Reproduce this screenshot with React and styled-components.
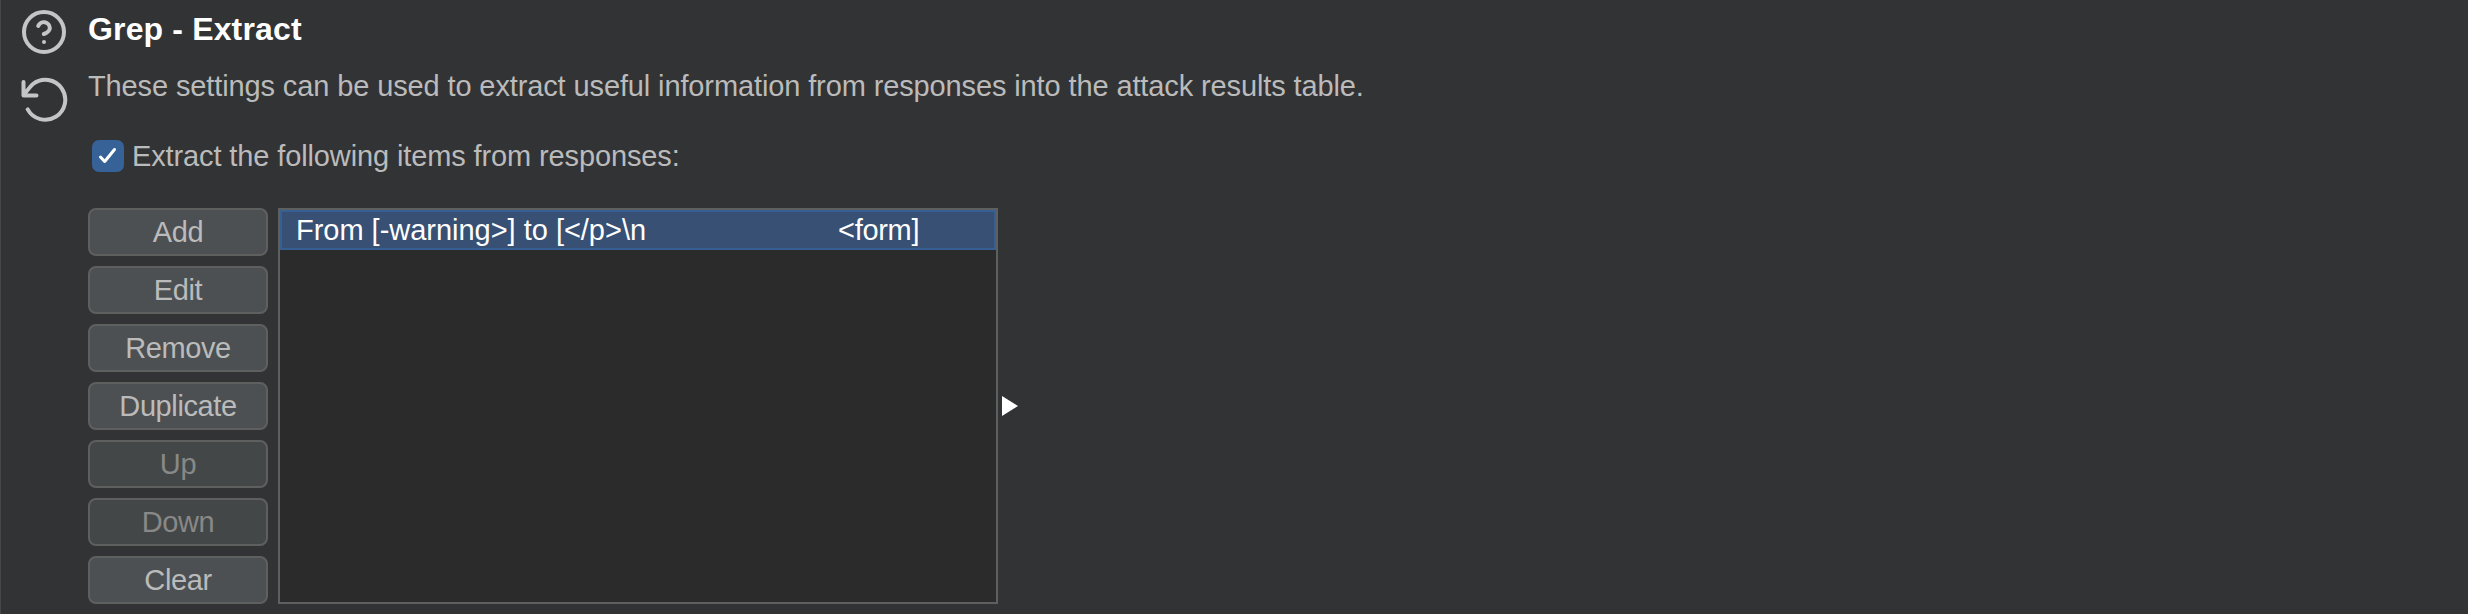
import React from 'react';
import styled, { createGlobalStyle } from 'styled-components';

const GlobalStyle = createGlobalStyle`
  * { box-sizing: border-box; }
  body {
    margin: 0;
    background: #323335;
    font-family: "Liberation Sans", Arial, sans-serif;
    font-size: 29px;
    color: #bbbbbb;
  }
`;

const Panel = styled.main`
  display: flex;
  height: 614px;
  overflow: hidden;
  border-left: 1px solid #464749;
  background: #323335;
`;

const Rail = styled.aside`
  display: flex;
  flex-direction: column;
  width: 87px;
  padding: 8px 0 0 19px;
  gap: 20px;
  flex: none;
`;

const IconButton = styled.button`
  display: block;
  width: 48px;
  height: 48px;
  padding: 0;
  border: 0;
  background: none;
  color: #c4c5c7;
  svg { display: block; fill: none; stroke: currentColor; stroke-width: 4; stroke-linecap: round; stroke-linejoin: round; }
`;

const Content = styled.section`
  display: flex;
  flex-direction: column;
  flex: 1;
`;

const Line = styled.span`
  display: block;
  white-space: pre;
  line-height: 32px;
  letter-spacing: ${(p) => p.$track ?? -0.12}px;
`;

const Title = styled.h1`
  margin: 13px 0 0;
  font-size: 32px;
  line-height: 32px;
  font-weight: 700;
  color: #ffffff;
  letter-spacing: 0.15px;
`;

const Description = styled.div`
  margin-top: 25px;
`;

const CheckRow = styled.label`
  display: flex;
  align-items: center;
  margin: 38px 0 0 4px;
  height: 32px;
  gap: 8px;
`;

const CheckBox = styled.span`
  width: 32px;
  height: 32px;
  border-radius: 7px;
  background: #376297;
  svg { display: block; }
`;

const Editor = styled.div`
  display: flex;
  margin-top: 36px;
  height: 396px;
`;

const Actions = styled.div`
  display: flex;
  flex-direction: column;
  gap: 10px;
  width: 180px;
  margin-right: 10px;
`;

const ActionButton = styled.button`
  display: flex;
  align-items: center;
  justify-content: center;
  height: 48px;
  padding: 0;
  border: 2px solid #5e6060;
  border-radius: 8px;
  background: #4c5052;
  color: #bbbbbb;
  font: inherit;
  &:disabled { background: #444747; color: #888888; }
`;

const ItemList = styled.div`
  width: 720px;
  border: 2px solid #5e6060;
  background: #2b2b2b;
`;

const Item = styled.div`
  display: flex;
  height: 40px;
  padding: 0 0 0 14px;
  align-items: center;
  border: 2px solid #375f94;
  background: #375073;
  color: #ffffff;
`;

const ItemHead = styled.span`
  width: 542px;
`;

const Expander = styled.button`
  align-self: flex-start;
  margin: 188px 0 0 4px;
  padding: 0;
  border: 0;
  background: none;
  svg { display: block; }
`;

const actions = [
  { label: 'Add' },
  { label: 'Edit' },
  { label: 'Remove' },
  { label: 'Duplicate' },
  { label: 'Up', disabled: true },
  { label: 'Down', disabled: true },
  { label: 'Clear' },
];

export default function App() {
  return (
    <>
      <GlobalStyle />
      <Panel>
        <Rail>
          <IconButton aria-label="Help">
            <svg width="48" height="48" viewBox="0 0 48 48">
              <circle cx="24" cy="24" r="20" />
              <path d="M18.2 18a6 6 0 0 1 11.6 2c0 4-6 6-6 6M24 34h.02" />
            </svg>
          </IconButton>
          <IconButton aria-label="Reset">
            <svg width="48" height="48" viewBox="0 0 48 48">
              <path d="M7.7 33.4A20 20 0 1 0 13 8Q11 9.6 3.7 19M3.5 6V19.4H16.5" />
            </svg>
          </IconButton>
        </Rail>
        <Content>
          <Title>Grep - Extract</Title>
          <Description>
            <Line>These settings can be used to extract useful information from responses into the attack results table.</Line>
          </Description>
          <CheckRow>
            <CheckBox>
              <svg width="32" height="32" viewBox="0 0 32 32" fill="none" stroke="#fff" strokeWidth="3" strokeLinecap="round" strokeLinejoin="round">
                <path d="M8.5 17L12.7 21.5L22.5 9.5" />
              </svg>
            </CheckBox>
            <Line>Extract the following items from responses:</Line>
          </CheckRow>
          <Editor>
            <Actions>
              {actions.map((a) => (
                <ActionButton key={a.label} disabled={a.disabled}>
                  <Line $track={-0.4}>{a.label}</Line>
                </ActionButton>
              ))}
            </Actions>
            <ItemList>
              <Item>
                <ItemHead>
                  <Line $track={-0.02}>{'From [-warning>] to [</p>\\n'}</Line>
                </ItemHead>
                <Line $track={-0.3}>{'<form]'}</Line>
              </Item>
            </ItemList>
            <Expander aria-label="Expand">
              <svg width="16" height="20" viewBox="0 0 16 20">
                <path d="M0 0L16 10L0 20Z" fill="#fff" />
              </svg>
            </Expander>
          </Editor>
        </Content>
      </Panel>
    </>
  );
}
